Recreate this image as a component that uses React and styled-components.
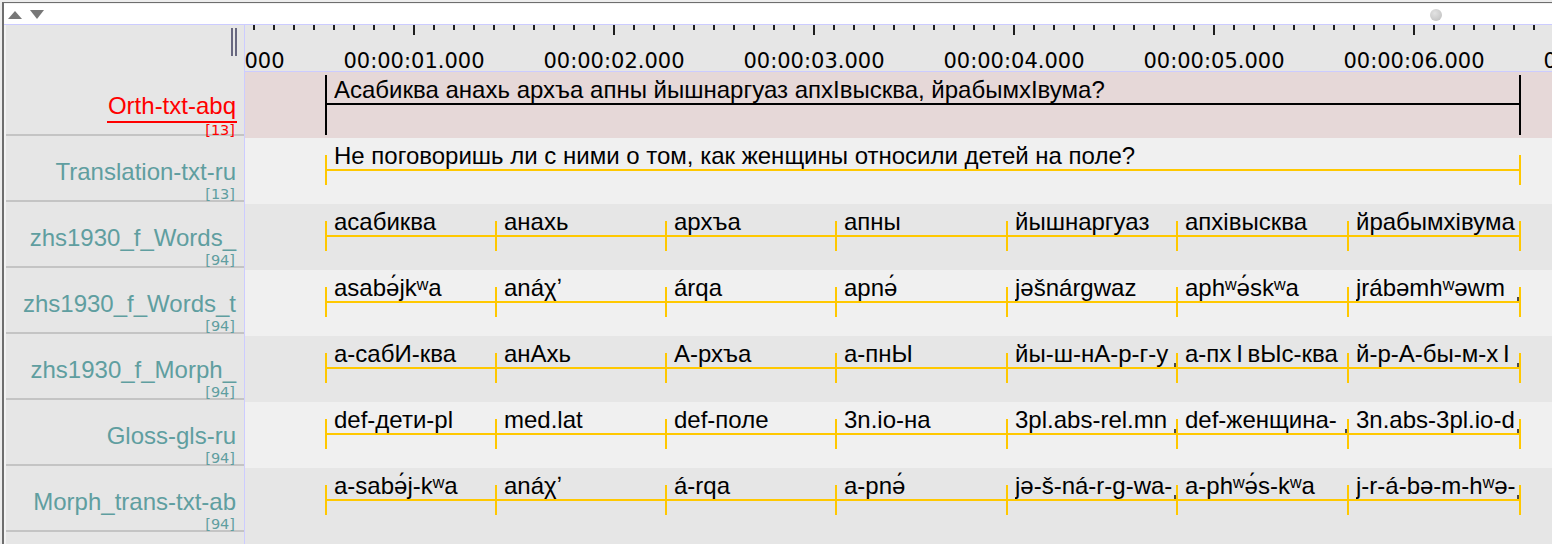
import React from "react";
import styled, { createGlobalStyle } from "styled-components";

const PX_PER_SEC = 200;
const ORIGIN = -31; // x of 00:00:00.000 inside the timeline column
const toX = (t) => Math.round(ORIGIN + t * PX_PER_SEC);

const GlobalStyle = createGlobalStyle`
  html, body {
    margin: 0;
    padding: 0;
    background: #ededed;
    overflow: hidden;
  }
  body {
    font-family: "Liberation Sans", Arial, sans-serif;
  }
`;

const Frame = styled.div`
  box-sizing: border-box;
  margin: 2px 0 0 2px;
  height: calc(100vh - 2px);
  border-top: 1px solid #6e6e6e;
  border-left: 2px solid #6e6e6e;
  background: #fff;
  display: flex;
  flex-direction: column;
  overflow: hidden;
`;

const TopBar = styled.div`
  height: 20px;
  flex: none;
  display: flex;
  align-items: flex-start;
  padding-left: 4px;
  background: #fff;
  border-top: 1px solid #f2f2f2;
  border-bottom: 1px solid #ccccff;
`;

const ArrowUp = styled.span`
  width: 0;
  height: 0;
  margin-top: 7px;
  border-left: 7px solid transparent;
  border-right: 7px solid transparent;
  border-bottom: 8px solid #777;
`;

const ArrowDown = styled.span`
  width: 0;
  height: 0;
  margin: 6px 0 0 8px;
  border-left: 7px solid transparent;
  border-right: 7px solid transparent;
  border-top: 9px solid #777;
`;

const Knob = styled.span`
  width: 12px;
  height: 12px;
  margin: 5px 110px 0 auto;
  border-radius: 50%;
  background: radial-gradient(circle at 40% 35%, #e2e2e2, #bcbcbc);
`;

const Main = styled.div`
  flex: 1;
  display: flex;
  min-height: 0;
  border-left: 2px solid #f3f3f3;
`;

const LabelColumn = styled.div`
  width: 238px;
  flex: none;
  display: flex;
  flex-direction: column;
  background: #e6e6e6;
  border-right: 1px solid #ccccff;
`;

const LabelHeader = styled.div`
  height: 45px;
  flex: none;
  display: flex;
  justify-content: flex-end;
  padding: 3px 7px 0 0;
  box-sizing: border-box;
`;

const SplitHandle = styled.span`
  width: 2px;
  height: 28px;
  border-left: 2px solid #686880;
  border-right: 2px solid #686880;
`;

const LabelRow = styled.div`
  box-sizing: border-box;
  height: 66px;
  flex: none;
  display: flex;
  flex-direction: column;
  align-items: flex-end;
  padding: 24px 8px 0 0;
  border-bottom: 2px solid #c4c4c4;
  color: ${(p) => (p.$active ? "#ff0000" : "#5f9ea0")};
`;

const TierName = styled.span`
  font-size: 24px;
  line-height: 24px;
  white-space: nowrap;
  padding: 0 1px 3px 1px;
  margin-right: -1px;
  border-bottom: ${(p) => (p.$active ? "2px solid #ff0000" : "none")};
`;

const TierCount = styled.span`
  font-family: "DejaVu Sans", sans-serif;
  font-size: 14.5px;
  line-height: 14px;
  padding-right: 1px;
`;

const Timeline = styled.div`
  flex: 1;
  min-width: 0;
  display: flex;
  flex-direction: column;
  background: #e6e6e6;
  overflow: hidden;
`;

const Ruler = styled.div`
  height: 46px;
  flex: none;
  background: #e6e6e6;
  border-bottom: 1px solid #ccccff;
`;

const RulerSvg = styled.svg`
  display: block;
  width: 100%;
  height: 46px;
`;

const Band = styled.div`
  height: 66px;
  flex: none;
  display: flex;
  background: ${(p) => p.$bg};
`;

const Segment = styled.div`
  position: relative;
  flex: none;
  height: 100%;

  &::before {
    content: "";
    position: absolute;
    left: -1px;
    top: ${(p) => (p.$active ? 3 : 17)}px;
    width: 2px;
    height: ${(p) => (p.$active ? 60 : 30)}px;
    background: ${(p) => p.$color};
  }

  &::after {
    content: "";
    position: absolute;
    left: 0;
    right: 0;
    top: 31px;
    height: 2px;
    background: ${(p) => p.$color};
  }
`;

const EndTick = styled.span`
  position: absolute;
  right: -1px;
  top: ${(p) => (p.$active ? 3 : 17)}px;
  width: 2px;
  height: ${(p) => (p.$active ? 60 : 30)}px;
  background: ${(p) => p.$color};
`;

const SegText = styled.div`
  margin: 4px 4px 0 8px;
  padding: 2px 0;
  font-size: 24px;
  line-height: 24px;
  color: #000;
  white-space: nowrap;
  overflow: hidden;
`;

const CutMark = styled.span`
  position: absolute;
  right: 0;
  top: 27px;
  width: 3px;
  height: 4px;
  background: #4a4a4a;
`;

const B = [0.56, 1.41, 2.26, 3.11, 3.965, 4.815, 5.67, 6.53];

// a leading "~" marks an annotation whose value is cut at the segment end
const words = (list) =>
  list.map((w, i) => {
    const cut = w.startsWith("~");
    return { from: B[i], to: B[i + 1], text: cut ? w.slice(1) : w, cut };
  });

const tiers = [
  {
    name: "Orth-txt-abq",
    count: 13,
    active: true,
    bg: "#e6d8d8",
    segs: [
      {
        from: B[0],
        to: B[7],
        text: "Асабиква анахь архъа апны йышнаргуаз апхIвысква, йрабымхIвума?",
      },
    ],
  },
  {
    name: "Translation-txt-ru",
    count: 13,
    bg: "#f0f0f0",
    segs: [
      {
        from: B[0],
        to: B[7],
        text: "Не поговоришь ли с ними о том, как женщины относили детей на поле?",
      },
    ],
  },
  {
    name: "zhs1930_f_Words_",
    count: 94,
    bg: "#e6e6e6",
    segs: words(["асабиква", "анахь", "архъа", "апны", "йышнаргуаз", "апхівысква", "йрабымхівума"]),
  },
  {
    name: "zhs1930_f_Words_t",
    count: 94,
    bg: "#f0f0f0",
    segs: words(["asabə́jkʷa", "anáχʼ", "árqa", "apnə́", "jəšnárgwaz", "aphʷə́skʷa", "~jrábəmhʷəwm"]),
  },
  {
    name: "zhs1930_f_Morph_",
    count: 94,
    bg: "#e6e6e6",
    segs: words(["а-сабИ-ква", "анАхь", "А-рхъа", "а-пнЫ", "~йы-ш-нА-р-г-у", "а-пх\u2009Ӏ\u2009вЫс-ква", "~й-р-А-бы-м-х\u2009Ӏ"]),
  },
  {
    name: "Gloss-gls-ru",
    count: 94,
    bg: "#f0f0f0",
    segs: words(["def-дети-pl", "med.lat", "def-поле", "3n.io-на", "~3pl.abs-rel.mn", "~def-женщина-", "~3n.abs-3pl.io-d"]),
  },
  {
    name: "Morph_trans-txt-ab",
    count: 94,
    bg: "#e6e6e6",
    segs: words(["a-sabə́j-kʷa", "anáχʼ", "á-rqa", "a-pnə́", "~jə-š-ná-r-g-wa-", "a-phʷə́s-kʷa", "~j-r-á-bə-m-hʷə-"]),
  },
];

const pad = (n) => String(n).padStart(2, "0");

const TimeRuler = () => {
  const ticks = [];
  for (let k = 0; k < 70; k++) {
    const x = ORIGIN + k * 20;
    if (x < 0) continue;
    const major = k % 10 === 0;
    ticks.push(<rect key={k} x={x - 1} y={0} width={2} height={major ? 10 : 5} fill="#1e1e1e" />);
  }
  const labels = [];
  for (let s = 0; s <= 7; s++) {
    labels.push(
      <text
        key={s}
        x={ORIGIN + s * PX_PER_SEC}
        y={43}
        textAnchor="middle"
        fontFamily="'DejaVu Sans', sans-serif"
        fontSize="21"
        fill="#000"
      >
        {`00:00:${pad(s)}.000`}
      </text>
    );
  }
  return (
    <Ruler>
      <RulerSvg>
        {ticks}
        {labels}
      </RulerSvg>
    </Ruler>
  );
};

const TierBand = ({ tier }) => {
  const color = tier.active ? "#000" : "#ffc800";
  const last = tier.segs.length - 1;
  return (
    <Band $bg={tier.bg} style={{ paddingLeft: toX(tier.segs[0].from) }}>
      {tier.segs.map((s, i) => (
        <Segment
          key={i}
          $color={color}
          $active={tier.active}
          style={{ width: toX(s.to) - toX(s.from) }}
        >
          <SegText>{s.text}</SegText>
          {s.cut && <CutMark />}
          {i === last && <EndTick $color={color} $active={tier.active} />}
        </Segment>
      ))}
    </Band>
  );
};

export default function App() {
  return (
    <>
      <GlobalStyle />
      <Frame>
        <TopBar>
          <ArrowUp />
          <ArrowDown />
          <Knob />
        </TopBar>
        <Main>
          <LabelColumn>
            <LabelHeader>
              <SplitHandle />
            </LabelHeader>
            {tiers.map((t) => (
              <LabelRow key={t.name} $active={t.active}>
                <TierName $active={t.active}>{t.name}</TierName>
                <TierCount>[{t.count}]</TierCount>
              </LabelRow>
            ))}
          </LabelColumn>
          <Timeline>
            <TimeRuler />
            {tiers.map((t) => (
              <TierBand key={t.name} tier={t} />
            ))}
          </Timeline>
        </Main>
      </Frame>
    </>
  );
}
